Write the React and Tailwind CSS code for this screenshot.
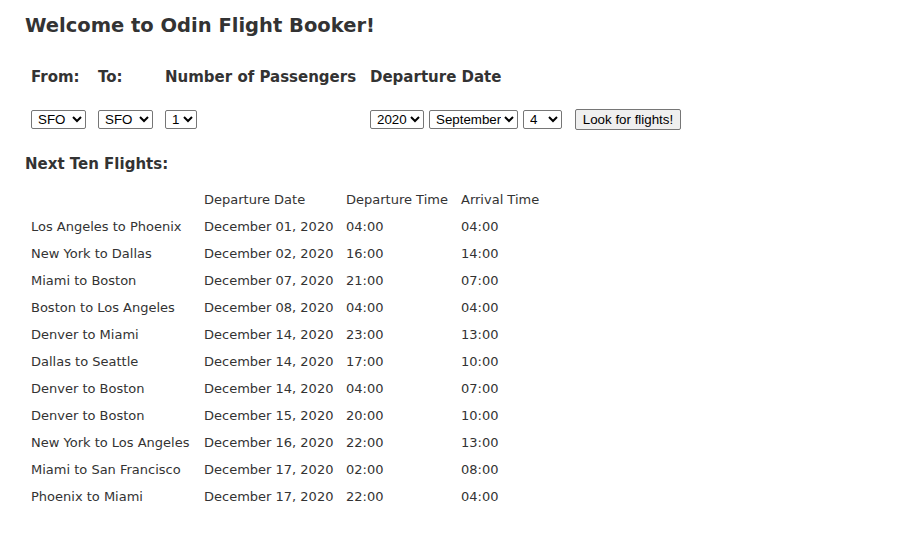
import React from "react";

const flights = [
  ["Los Angeles to Phoenix", "December 01, 2020", "04:00", "04:00"],
  ["New York to Dallas", "December 02, 2020", "16:00", "14:00"],
  ["Miami to Boston", "December 07, 2020", "21:00", "07:00"],
  ["Boston to Los Angeles", "December 08, 2020", "04:00", "04:00"],
  ["Denver to Miami", "December 14, 2020", "23:00", "13:00"],
  ["Dallas to Seattle", "December 14, 2020", "17:00", "10:00"],
  ["Denver to Boston", "December 14, 2020", "04:00", "07:00"],
  ["Denver to Boston", "December 15, 2020", "20:00", "10:00"],
  ["New York to Los Angeles", "December 16, 2020", "22:00", "13:00"],
  ["Miami to San Francisco", "December 17, 2020", "02:00", "08:00"],
  ["Phoenix to Miami", "December 17, 2020", "22:00", "04:00"],
];

const sel =
  "h-[19px] border border-[#767676] rounded-[2px] bg-white text-black text-[13.33px] font-normal pl-[2px] font-['Liberation_Sans',Arial,sans-serif] leading-none";

function Sel({ value, w }) {
  return (
    <select className={sel + " " + w} defaultValue={value}>
      <option>{value}</option>
    </select>
  );
}

export default function App() {
  return (
    <div className="min-h-[540px] w-[902px] bg-white text-[#333] font-['DejaVu_Sans',Verdana,sans-serif] pl-[25px] pt-[12px]">
      <h1 className="text-[19.5px] font-bold leading-[28px]">Welcome to Odin Flight Booker!</h1>
      <div className="mt-[24px] pl-[6px] grid grid-cols-[67px_67px_205px_auto] text-[15px] font-bold">
        <div className="h-[26px] flex items-center">From:</div>
        <div className="h-[26px] flex items-center">To:</div>
        <div className="h-[26px] flex items-center">Number of Passengers</div>
        <div className="h-[26px] flex items-center">Departure Date</div>
        <div className="mt-[19px] h-[21px] flex items-center"><Sel value="SFO" w="w-[55px]" /></div>
        <div className="mt-[19px] h-[21px] flex items-center"><Sel value="SFO" w="w-[55px]" /></div>
        <div className="mt-[19px] h-[21px] flex items-center"><Sel value="1" w="w-[32px]" /></div>
        <div className="mt-[19px] h-[21px] flex items-center gap-[5px] font-normal">
          <Sel value="2020" w="w-[54px]" />
          <Sel value="September" w="w-[89px]" />
          <Sel value="4" w="w-[39px]" />
          <button className="ml-[8px] h-[21px] w-[106px] border border-[#767676] rounded-[2px] bg-[#efefef] text-black text-[13.33px] font-['Liberation_Sans',Arial,sans-serif] leading-none">
            Look for flights!
          </button>
        </div>
      </div>
      <h2 className="mt-[24px] text-[15px] font-bold leading-[20px]">Next Ten Flights:</h2>
      <div className="mt-[17px] pl-[6px] grid grid-cols-[173px_142px_115px_auto] text-[13px] w-[600px]">
        <div className="h-[18px]"></div>
        <div className="h-[18px] leading-[18px]">Departure Date</div>
        <div className="h-[18px] leading-[18px]">Departure Time</div>
        <div className="h-[18px] leading-[18px]">Arrival Time</div>
        {flights.map((f, i) => (
          <React.Fragment key={i}>
            {f.map((c, j) => (
              <div key={j} className="mt-[9px] h-[18px] leading-[18px]">{c}</div>
            ))}
          </React.Fragment>
        ))}
      </div>
    </div>
  );
}
